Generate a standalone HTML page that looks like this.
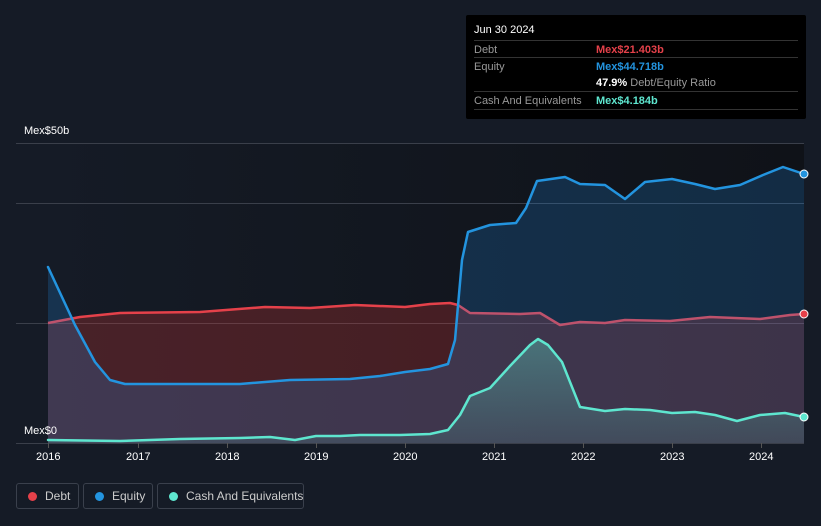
<!DOCTYPE html>
<html><head><meta charset="utf-8"><style>
body{margin:0;width:821px;height:526px;overflow:hidden;background:#151b26;font-family:"Liberation Sans",sans-serif;position:relative}
.tt{position:absolute;left:466px;top:15px;width:340px;height:104px;background:#000;border-radius:2px}
.tt .h{position:absolute;left:8px;top:9px;color:#fff;font-size:11px}
.row{position:absolute;left:8px;width:324px;border-top:1px solid #333;height:17px;font-size:11px;color:#999;white-space:nowrap}
.row span{position:absolute;left:122px;top:3px;font-weight:bold}
.row .l{position:absolute;left:0;top:3px}
.leg{position:absolute;top:483px;height:26px;border:1px solid #3a404c;border-radius:3px;color:#ccc;font-size:12px;box-sizing:border-box;white-space:nowrap}
.leg i{position:absolute;left:11px;top:8px;width:9px;height:9px;border-radius:50%}
.leg b{position:absolute;left:28px;top:5px;font-weight:normal}
.ax{position:absolute;color:#fff;font-size:11px}
</style></head><body>
<svg width="821" height="526" style="position:absolute;left:0;top:0">
<defs><linearGradient id="bg" x1="0" x2="1"><stop offset="0" stop-color="#151b26"/><stop offset="1" stop-color="#0f1218"/></linearGradient>
<linearGradient id="cg" x1="0" y1="0" x2="0" y2="1"><stop offset="0" stop-color="#5ee6cf" stop-opacity="0.35"/><stop offset="1" stop-color="#5ee6cf" stop-opacity="0.12"/></linearGradient></defs>
<rect x="48" y="143" width="756" height="300" fill="url(#bg)"/>
<g stroke="#3a3f4a" stroke-width="1"><line x1="16" y1="143.5" x2="804" y2="143.5"/><line x1="16" y1="203.5" x2="804" y2="203.5"/><line x1="16" y1="323.5" x2="804" y2="323.5"/><line x1="16" y1="443.5" x2="804" y2="443.5"/></g>
<g stroke="#555" stroke-width="1"><line x1="48.5" y1="443" x2="48.5" y2="448"/><line x1="138.5" y1="443" x2="138.5" y2="448"/><line x1="227.5" y1="443" x2="227.5" y2="448"/><line x1="316.5" y1="443" x2="316.5" y2="448"/><line x1="405.5" y1="443" x2="405.5" y2="448"/><line x1="494.5" y1="443" x2="494.5" y2="448"/><line x1="583.5" y1="443" x2="583.5" y2="448"/><line x1="672.5" y1="443" x2="672.5" y2="448"/><line x1="761.5" y1="443" x2="761.5" y2="448"/></g>
<path d="M48,323 L80,317 L120,313 L200,312 L265,307 L310,308 L355,305 L405,307 L430,304 L450,303 L458,305 L470,313 L520,314 L540,313 L560,325 L580,322 L605,323 L625,320 L670,321 L710,317 L760,319 L790,315 L804,314 L804,443 L48,443Z" fill="#e53935" fill-opacity="0.25"/>
<path d="M48,323 L80,317 L120,313 L200,312 L265,307 L310,308 L355,305 L405,307 L430,304 L450,303 L458,305 L470,313 L520,314 L540,313 L560,325 L580,322 L605,323 L625,320 L670,321 L710,317 L760,319 L790,315 L804,314" stroke="#e5414a" fill="none" stroke-width="2.5" stroke-linejoin="round"/>
<path d="M48,267 L75,325 L95,362 L110,380 L125,384 L240,384 L290,380 L350,379 L380,376 L405,372 L430,369 L448,364 L455,340 L462,260 L468,232 L490,225 L516,223 L526,208 L537,181 L565,177 L580,184 L605,185 L625,199 L645,182 L672,179 L695,184 L715,189 L740,185 L763,175 L783,167 L804,174 L804,443 L48,443Z" fill="#2196f3" fill-opacity="0.2"/>
<path d="M48,440 L120,441 L180,439 L240,438 L270,437 L295,440 L316,436 L340,436 L360,435 L400,435 L430,434 L448,430 L460,415 L470,396 L490,388 L510,366 L530,345 L538,339 L548,345 L562,362 L580,407 L605,411 L625,409 L650,410 L672,413 L695,412 L715,415 L737,421 L760,415 L785,413 L804,417 L804,443 L48,443Z" fill="url(#cg)"/>
<g fill="none" stroke-width="2.5" stroke-linejoin="round" stroke-linecap="round">
<path d="M48,267 L75,325 L95,362 L110,380 L125,384 L240,384 L290,380 L350,379 L380,376 L405,372 L430,369 L448,364 L455,340 L462,260 L468,232 L490,225 L516,223 L526,208 L537,181 L565,177 L580,184 L605,185 L625,199 L645,182 L672,179 L695,184 L715,189 L740,185 L763,175 L783,167 L804,174" stroke="#2394df"/>
<path d="M48,440 L120,441 L180,439 L240,438 L270,437 L295,440 L316,436 L340,436 L360,435 L400,435 L430,434 L448,430 L460,415 L470,396 L490,388 L510,366 L530,345 L538,339 L548,345 L562,362 L580,407 L605,411 L625,409 L650,410 L672,413 L695,412 L715,415 L737,421 L760,415 L785,413 L804,417" stroke="#5ee6cf"/>
</g>
<circle cx="804" cy="174" r="4" fill="#2394df" stroke="#fff" stroke-width="1"/>
<circle cx="804" cy="314" r="4" fill="#e5414a" stroke="#fff" stroke-width="1"/>
<circle cx="804" cy="417" r="4" fill="#5ee6cf" stroke="#fff" stroke-width="1"/>
</svg>
<div class="ax" style="left:24px;top:125px">Mex$50b</div>
<div class="ax" style="left:24px;top:425px">Mex$0</div>
<div class="ax" style="left:36px;top:451px">2016</div>
<div class="ax" style="left:126px;top:451px">2017</div>
<div class="ax" style="left:215px;top:451px">2018</div>
<div class="ax" style="left:304px;top:451px">2019</div>
<div class="ax" style="left:393px;top:451px">2020</div>
<div class="ax" style="left:482px;top:451px">2021</div>
<div class="ax" style="left:571px;top:451px">2022</div>
<div class="ax" style="left:660px;top:451px">2023</div>
<div class="ax" style="left:749px;top:451px">2024</div>
<div class="tt"><div class="h">Jun 30 2024</div>
<div class="row" style="top:25px"><div class="l">Debt</div><span style="color:#e5414a">Mex$21.403b</span></div>
<div class="row" style="top:42px"><div class="l">Equity</div><span style="color:#2394df">Mex$44.718b</span></div>
<div class="row" style="top:59px;border-top:none"><span style="color:#fff">47.9% <b style="color:#999;font-weight:normal">Debt/Equity Ratio</b></span></div>
<div class="row" style="top:76px"><div class="l">Cash And Equivalents</div><span style="color:#5ee6cf">Mex$4.184b</span></div>
<div class="row" style="top:94px;height:0"></div>
</div>
<div class="leg" style="left:16px;width:63px"><i style="background:#e5414a"></i><b>Debt</b></div>
<div class="leg" style="left:83px;width:70px"><i style="background:#2394df"></i><b>Equity</b></div>
<div class="leg" style="left:157px;width:147px"><i style="background:#5ee6cf"></i><b>Cash And Equivalents</b></div>
</body></html>
